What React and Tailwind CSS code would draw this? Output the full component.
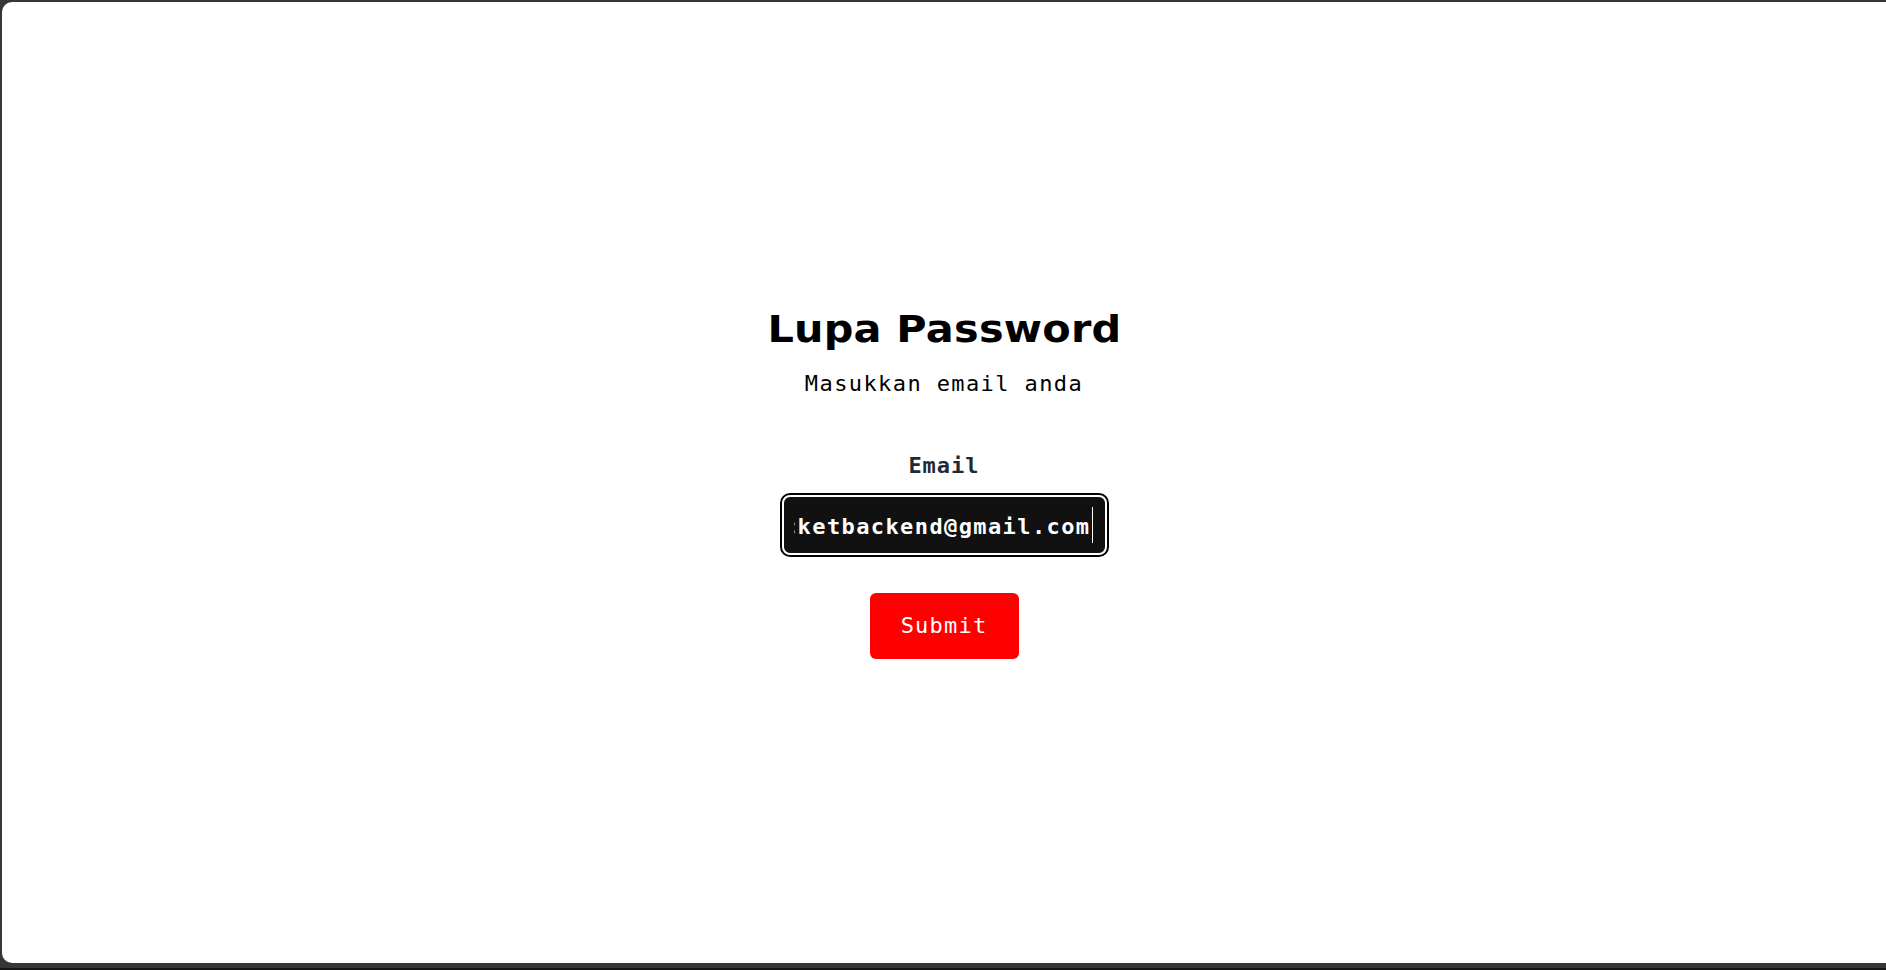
export default function App() {
    const email = 'rocketbackend@gmail.com';

    return (
        <div className="h-screen w-full bg-[#363636] pt-[2px] pl-[2px] pb-[5px] border-b-2 border-[#151515] flex">
            <div className="flex-1 bg-white rounded-tl-[10px] rounded-bl-[10px] flex flex-col items-center justify-center pt-[4px]">
                <h1 className="scale-x-[1.09] text-[38px] leading-[38px] font-bold tracking-[0.2px] text-black font-['DejaVu_Sans',sans-serif]">
                    Lupa Password
                </h1>
                <p className="mt-[22px] text-[22px] leading-[28px] tracking-[1.4px] text-black font-['DejaVu_Sans_Mono',monospace]">
                    Masukkan email anda
                </p>

                <label className="mt-[54px] text-[22px] leading-[28px] font-bold tracking-[1px] text-[#1f2937] font-['DejaVu_Sans_Mono',monospace]">
                    Email
                </label>
                <div className="mt-[15px] h-[60px] w-[325px] rounded-[8px] border-2 border-white bg-[#111111] ring-2 ring-black pl-[10px] pr-[12px] flex items-center">
                    <div className="flex-1 flex items-center justify-end overflow-hidden">
                        <span className="whitespace-nowrap text-[22px] leading-[28px] font-bold tracking-[1.4px] text-white font-['DejaVu_Sans_Mono',monospace] pt-[4px]">
                            {email}
                        </span>
                        <span className="ml-[1px] h-[36px] w-px shrink-0 bg-white" />
                    </div>
                </div>

                <button className="mt-[38px] h-[66px] w-[149px] rounded-[6px] bg-[#ff0000] text-white text-[22px] leading-[28px] tracking-[1.2px] font-['DejaVu_Sans_Mono',monospace]">
                    Submit
                </button>
            </div>
        </div>
    );
}
